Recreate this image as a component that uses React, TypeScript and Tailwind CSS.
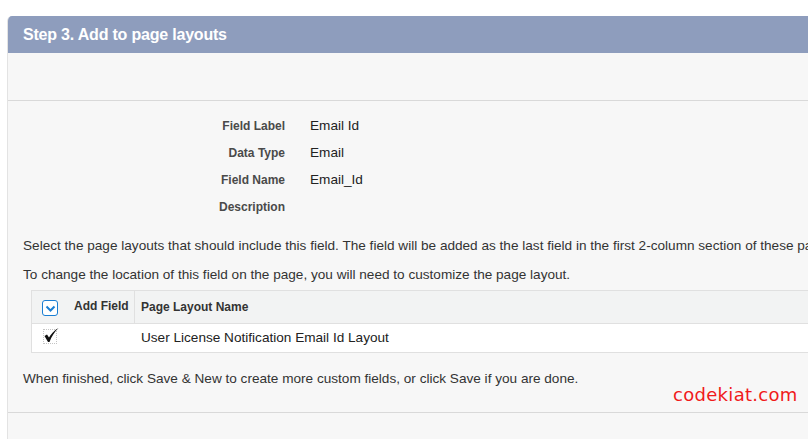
export default function App() {
  const fields = [
    { label: "Field Label", value: "Email Id" },
    { label: "Data Type", value: "Email" },
    { label: "Field Name", value: "Email_Id" },
    { label: "Description", value: "" },
  ];

  return (
    <div
      className="w-[808px] h-[439px] overflow-hidden bg-white pt-4 pl-[7px]"
      style={{ fontFamily: '"Liberation Sans", Arial, sans-serif' }}
    >
      <div className="w-[820px] h-[440px] bg-[#f7f7f7] border-l border-[#e3e3e3] rounded-tl-[5px] overflow-hidden">
        {/* Header */}
        <div className="h-[37px] bg-[#8e9dbd] flex items-center pl-[15px]">
          <h2 className="text-[16px] font-bold text-white tracking-[-0.2px]">
            Step 3. Add to page layouts
          </h2>
        </div>

        {/* Empty toolbar row */}
        <div className="h-[48px] border-b border-[#d9d9d9]" />

        {/* Field details */}
        <div className="pt-[16px] flex flex-col gap-[9px]">
          {fields.map((f) => (
            <div key={f.label} className="flex items-center h-[18px]">
              <span className="w-[277px] text-right text-[12px] font-bold text-[#4a4a4a]">
                {f.label}
              </span>
              <span className="ml-[25px] text-[13.6px] text-[#222]">{f.value}</span>
            </div>
          ))}
        </div>

        <div className="pl-[15px] pt-[21px] text-[13.6px] text-[#333] whitespace-nowrap">
          <p className="h-[18px] leading-[18px]">
            Select the page layouts that should include this field. The field will be added as the last field in the first 2-column section of these page layouts.
          </p>
          <p className="h-[18px] leading-[18px] mt-[11px]">
            To change the location of this field on the page, you will need to customize the page layout.
          </p>
        </div>

        {/* Table */}
        <div className="ml-[23px] mt-[6px] w-[800px] border border-[#e0e0e0] bg-white">
          <div className="flex h-[33px] bg-[#f2f3f3] border-b border-[#e0e0e0]">
            <div className="w-[103px] flex items-start pt-[9px] pl-[10px] gap-[16px] border-r border-[#e0e0e0]">
              <span className="w-[16px] h-[16px] rounded-[3px] border-[1.5px] border-[#1a7ed3] bg-white flex items-center justify-center">
                <svg width="11" height="9" viewBox="0 0 11 9">
                  <path d="M1.5 2.5 L5.5 6.5 L9.5 2.5" fill="none" stroke="#1a7ed3" strokeWidth="2" />
                </svg>
              </span>
              <span className="text-[12px] font-bold text-[#333] -mt-[3px]">Add Field</span>
            </div>
            <div className="flex items-center pl-[6px] text-[12px] font-bold text-[#333]">
              Page Layout Name
            </div>
          </div>
          <div className="flex h-[28px] items-center">
            <div className="w-[103px] pl-[11px] pt-[2px]">
              <span className="relative inline-block w-[14px] h-[15px] border border-dotted border-[#c4c4c4]">
                <svg
                  width="16"
                  height="16"
                  viewBox="0 0 16 16"
                  className="absolute -left-[1px] -top-[3px]"
                >
                  <path
                    d="M1.5 9 L4 7.5 L6 10.5 C8 7 11 3.5 15.5 1 C11.5 5 8.5 9.5 6.5 15 L5 15 Z"
                    fill="#111"
                  />
                </svg>
              </span>
            </div>
            <div className="pl-[6px] text-[13.6px] text-[#222]">
              User License Notification Email Id Layout
            </div>
          </div>
        </div>

        <div className="relative h-[60px] border-b border-[#d9d9d9]">
          <p className="pl-[15px] pt-[16px] text-[13.6px] text-[#333] whitespace-nowrap">
            When finished, click Save &amp; New to create more custom fields, or click Save if you are done.
          </p>
          <span
            className="absolute left-[665px] top-[28px] text-[18px] text-[#f01a1a] tracking-[0.3px]"
            style={{ fontFamily: '"DejaVu Sans", Verdana, sans-serif' }}
          >
            codekiat.com
          </span>
        </div>
      </div>
    </div>
  );
}
